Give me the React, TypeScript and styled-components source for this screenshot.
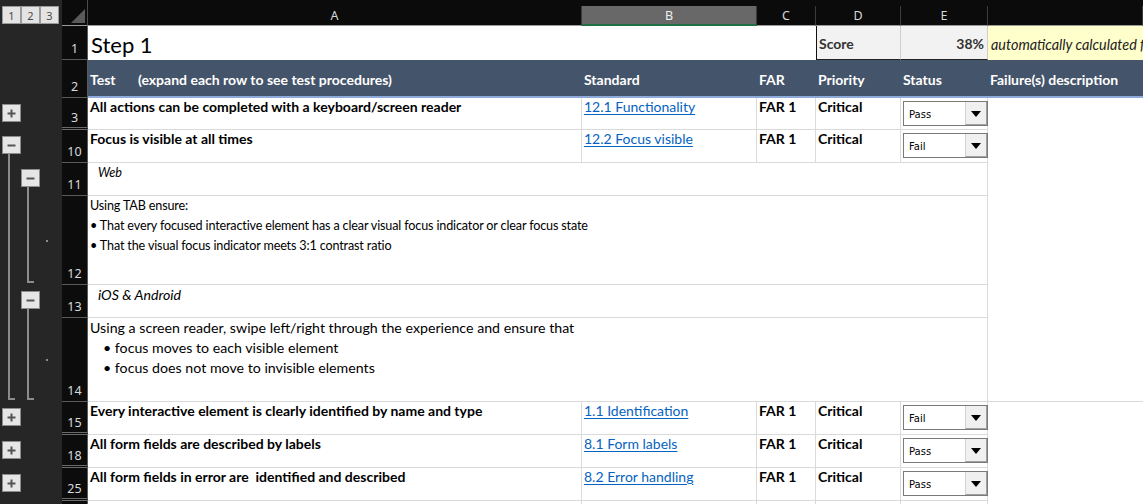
import React from 'react';
import styled, { createGlobalStyle, css } from 'styled-components';

const GlobalStyle = createGlobalStyle`
  html, body { margin: 0; padding: 0; background: #ffffff; }
  body { width: 1143px; height: 504px; overflow: hidden; font-family: Lato, "Liberation Sans", sans-serif; }
  *, *::before, *::after { box-sizing: border-box; }
`;

const COLS = '62px 26px 494px 175px 59px 85px 87px 1fr';
const GRID = '#dadada';
const OUTLINE = '#8c8c8c';

const Sheet = styled.div`
  width: 1143px;
  height: 504px;
  overflow: hidden;
  background: #ffffff;
  display: flex;
  flex-direction: column;
`;

const Row = styled.div<{ $h: number }>`
  display: grid;
  grid-template-columns: ${COLS};
  height: ${p => p.$h}px;
  flex: none;
`;

/* ---------- column header row ---------- */
const HeaderStrip = styled(Row)`
  background: #0b0b0b;
`;

const LevelBar = styled.div`
  background: #262626;
  display: flex;
  align-items: flex-start;
  padding: 6px 0 0 2px;
`;

const LevelButton = styled.div`
  width: 19px;
  height: 18px;
  background: #e4e4e4;
  border: 1px solid #9a9a9a;
  color: #4a4a4a;
  font-family: "Noto Sans", sans-serif;
  font-size: 11px;
  display: flex;
  align-items: center;
  justify-content: center;
`;

const SelectAll = styled.div`
  display: flex;
  align-items: flex-end;
  justify-content: flex-end;
  padding: 0 2px 2px 0;
  border-right: 1px solid #4a4a4a;
  border-bottom: 1px solid #9a9a9a;
`;

const Triangle = styled.div`
  width: 0;
  height: 0;
  border-left: 14px solid transparent;
  border-bottom: 14px solid #5a5a5a;
`;

const ColLetter = styled.div<{ $selected?: boolean }>`
  align-self: end;
  height: 20px;
  display: flex;
  align-items: center;
  justify-content: center;
  color: #d8d8d8;
  font-family: "Noto Sans", sans-serif;
  font-size: 12.5px;
  border-right: 1px solid #3c3c3c;
  ${p =>
    p.$selected
      ? css`
          background: #686868;
          color: #f0f0f0;
          border-bottom: 2px solid #1f7145;
        `
      : css`
          border-bottom: 1px solid #9a9a9a;
        `}
`;

/* ---------- outline gutter ---------- */
const Gutter = styled.div`
  background: #262626;
  display: flex;
  height: 100%;
`;

const Lane = styled.div<{ $w: number; $pl: number }>`
  width: ${p => p.$w}px;
  padding-left: ${p => p.$pl}px;
  display: flex;
  flex-direction: column;
  align-items: flex-start;
  flex: none;
`;

const OutlineButton = styled.div`
  width: 19px;
  height: 18px;
  margin-top: 6px;
  flex: none;
  background: #e6e6e6;
  border: 1px solid ${OUTLINE};
  display: flex;
  align-items: center;
  justify-content: center;
`;

const Stem = styled.div<{ $end?: boolean }>`
  flex: 1;
  margin-left: 6px;
  width: ${p => (p.$end ? 7 : 2)}px;
  border-left: 2px solid ${OUTLINE};
  ${p =>
    p.$end &&
    css`
      border-bottom: 2px solid ${OUTLINE};
      margin-bottom: 2px;
    `}
`;

const Dot = styled.div`
  width: 2px;
  height: 2px;
  background: ${OUTLINE};
  margin: auto 0 auto 6px;
`;

/* ---------- row numbers ---------- */
const RowNum = styled.div<{ $hiddenAfter?: boolean }>`
  background: #0c0c0c;
  color: #dadada;
  font-family: "Noto Sans", sans-serif;
  font-size: 12.5px;
  line-height: 14px;
  display: flex;
  align-items: flex-end;
  justify-content: center;
  padding-bottom: ${p => (p.$hiddenAfter ? 2 : 3)}px;
  border-right: 1px solid #5a5a5a;
  border-bottom: ${p => (p.$hiddenAfter ? '3px double #6a6a6a' : '1px solid #5a5a5a')};
`;

/* ---------- cells ---------- */
const Cell = styled.div<{ $bold?: boolean; $noBottom?: boolean; $noRight?: boolean }>`
  background: #ffffff;
  border-right: ${p => (p.$noRight ? 'none' : `1px solid ${GRID}`)};
  border-bottom: ${p => (p.$noBottom ? 'none' : `1px solid ${GRID}`)};
  padding: 0 2px;
  font-size: 14px;
  line-height: 18px;
  font-weight: ${p => (p.$bold ? 700 : 400)};
  color: #000000;
  white-space: nowrap;
  overflow: hidden;
`;

const StatusCell = styled(Cell)`
  padding: 3px 0 0 2px;
  overflow: visible;
`;

const DetailCell = styled(Cell)`
  grid-column: span 5;
  line-height: 20px;
  padding: 0 2px;
`;

const DetailLine = styled.div<{ $indent?: number; $italic?: boolean; $size: number; $track: number }>`
  padding-left: ${p => p.$indent ?? 0}px;
  font-size: ${p => p.$size}px;
  letter-spacing: ${p => p.$track}px;
  font-style: ${p => (p.$italic ? 'italic' : 'normal')};
`;

const Link = styled.a`
  color: #0563c1;
  text-decoration: underline;
  text-underline-offset: 2px;
`;

const TitleCell = styled.div`
  grid-column: span 3;
  background: #ffffff;
  font-size: 22px;
  display: flex;
  align-items: center;
  padding: 2px 0 0 3px;
  color: #000;
`;

const ScoreCell = styled.div<{ $right?: boolean }>`
  background: #f2f2f2;
  display: flex;
  align-items: center;
  justify-content: ${p => (p.$right ? 'flex-end' : 'flex-start')};
  padding: 2px 3px 0 2px;
  font-weight: 700;
  font-size: 14px;
  color: #333333;
  border-bottom: 1px solid #222;
  border-right: 1px solid #cfcfcf;
  ${p =>
    !p.$right &&
    css`
      border-left: 1px solid #111;
    `}
`;

const NoteCell = styled.div`
  background: #ffffcc;
  display: flex;
  align-items: center;
  padding: 2px 0 0 3px;
  font-style: italic;
  font-size: 14.4px;
  color: #222;
  white-space: nowrap;
  overflow: hidden;
`;

const BandCell = styled.div<{ $span?: number }>`
  grid-column: span ${p => p.$span ?? 1};
  background: #44546a;
  color: #ffffff;
  font-weight: 700;
  font-size: 14px;
  display: flex;
  align-items: center;
  padding: 2px 2px 0;
  white-space: nowrap;
  overflow: hidden;
  border-bottom: 2px solid #8eaadb;
`;

const BandLead = styled.span`
  display: inline-block;
  width: 48px;
`;

/* ---------- status dropdown ---------- */
const Select = styled.div`
  width: 85px;
  height: 25px;
  display: flex;
  background: #ffffff;
  border: 1px solid #7a7a7a;
`;

const SelectValue = styled.div`
  flex: 1;
  display: flex;
  align-items: center;
  padding: 3px 0 0 5px;
  font-family: "DejaVu Sans", sans-serif;
  font-size: 10px;
  color: #000;
`;

const SelectButton = styled.div`
  width: 22px;
  background: #f0f0f0;
  border-left: 1px solid #d4d4d4;
  border-right: 1px solid #a0a0a0;
  border-bottom: 1px solid #a0a0a0;
  display: flex;
  align-items: center;
  justify-content: center;
`;

const Caret = styled.div`
  width: 0;
  height: 0;
  border-left: 5px solid transparent;
  border-right: 5px solid transparent;
  border-top: 6px solid #000;
  margin-top: 1px;
`;

/* ---------- data ---------- */
type LaneSpec = null | 'line' | 'end' | 'dot' | { btn: '+' | '-'; stem?: boolean };

type MainRowData = {
  kind: 'main';
  num: number;
  h: number;
  test: string;
  link: string;
  status: 'Pass' | 'Fail';
  gutter: LaneSpec[];
  hiddenAfter?: boolean;
};

type DetailRowData = {
  kind: 'detail';
  num: number;
  h: number;
  size: number;
  track: number;
  lines: { text: string; indent?: number; italic?: boolean }[];
  gutter: LaneSpec[];
  fBottom?: boolean;
};

const rows: (MainRowData | DetailRowData)[] = [
  {
    kind: 'main',
    num: 3,
    h: 32,
    test: 'All actions can be completed with a keyboard/screen reader',
    link: '12.1 Functionality',
    status: 'Pass',
    gutter: [{ btn: '+' }, null, null],
    hiddenAfter: true,
  },
  {
    kind: 'main',
    num: 10,
    h: 33,
    test: 'Focus is visible at all times',
    link: '12.2 Focus visible',
    status: 'Fail',
    gutter: [{ btn: '-', stem: true }, null, null],
  },
  {
    kind: 'detail',
    num: 11,
    h: 33,
    size: 12.6,
    track: -0.1,
    lines: [{ text: 'Web', indent: 8, italic: true }],
    gutter: ['line', { btn: '-', stem: true }, null],
  },
  {
    kind: 'detail',
    num: 12,
    h: 89,
    size: 12.6,
    track: -0.15,
    lines: [
      { text: 'Using TAB ensure:' },
      { text: '\u2022 That every focused interactive element has a clear visual focus indicator or clear focus state' },
      { text: '\u2022 That the visual focus indicator meets 3:1 contrast ratio' },
    ],
    gutter: ['line', 'end', 'dot'],
  },
  {
    kind: 'detail',
    num: 13,
    h: 33,
    size: 14.2,
    track: 0,
    lines: [{ text: 'iOS & Android', indent: 8, italic: true }],
    gutter: ['line', { btn: '-', stem: true }, null],
  },
  {
    kind: 'detail',
    num: 14,
    h: 84,
    size: 14.2,
    track: 0,
    lines: [
      { text: 'Using a screen reader, swipe left/right through the experience and ensure that' },
      { text: '\u2022 focus moves to each visible element', indent: 13 },
      { text: '\u2022 focus does not move to invisible elements', indent: 13 },
    ],
    gutter: ['end', 'end', 'dot'],
    fBottom: true,
  },
  {
    kind: 'main',
    num: 15,
    h: 33,
    test: 'Every interactive element is clearly identified by name and type',
    link: '1.1 Identification',
    status: 'Fail',
    gutter: [{ btn: '+' }, null, null],
    hiddenAfter: true,
  },
  {
    kind: 'main',
    num: 18,
    h: 33,
    test: 'All form fields are described by labels',
    link: '8.1 Form labels',
    status: 'Pass',
    gutter: [{ btn: '+' }, null, null],
    hiddenAfter: true,
  },
  {
    kind: 'main',
    num: 25,
    h: 33,
    test: 'All form fields in error are \u00a0identified and described',
    link: '8.2 Error handling',
    status: 'Pass',
    gutter: [{ btn: '+' }, null, null],
    hiddenAfter: true,
  },
];

const LANES = [
  { w: 21, pl: 2 },
  { w: 19, pl: 0 },
  { w: 22, pl: 0 },
];

const Symbol: React.FC<{ kind: '+' | '-' }> = ({ kind }) => (
  <svg width="11" height="11" viewBox="0 0 11 11" aria-hidden="true">
    <path d="M1.5 5.5H9.5" stroke="#555" strokeWidth="2" />
    {kind === '+' && <path d="M5.5 1.5V9.5" stroke="#555" strokeWidth="2" />}
  </svg>
);

const OutlineGutter: React.FC<{ lanes: LaneSpec[] }> = ({ lanes }) => (
  <Gutter>
    {LANES.map((l, i) => {
      const spec = lanes[i];
      return (
        <Lane key={i} $w={l.w} $pl={l.pl}>
          {spec === 'line' && <Stem />}
          {spec === 'end' && <Stem $end />}
          {spec === 'dot' && <Dot />}
          {spec && typeof spec === 'object' && (
            <>
              <OutlineButton>
                <Symbol kind={spec.btn} />
              </OutlineButton>
              {spec.stem && <Stem />}
            </>
          )}
        </Lane>
      );
    })}
  </Gutter>
);

const StatusSelect: React.FC<{ value: string }> = ({ value }) => (
  <Select>
    <SelectValue>{value}</SelectValue>
    <SelectButton>
      <Caret />
    </SelectButton>
  </Select>
);

export default function App() {
  return (
    <>
      <GlobalStyle />
      <Sheet>
        <HeaderStrip $h={26}>
          <LevelBar>
            <LevelButton>1</LevelButton>
            <LevelButton>2</LevelButton>
            <LevelButton>3</LevelButton>
          </LevelBar>
          <SelectAll>
            <Triangle />
          </SelectAll>
          <ColLetter>A</ColLetter>
          <ColLetter $selected>B</ColLetter>
          <ColLetter>C</ColLetter>
          <ColLetter>D</ColLetter>
          <ColLetter>E</ColLetter>
          <ColLetter />
        </HeaderStrip>

        <Row $h={34}>
          <OutlineGutter lanes={[null, null, null]} />
          <RowNum>1</RowNum>
          <TitleCell>Step 1</TitleCell>
          <ScoreCell>Score</ScoreCell>
          <ScoreCell $right>38%</ScoreCell>
          <NoteCell>automatically calculated from the status of each test</NoteCell>
        </Row>

        <Row $h={38}>
          <OutlineGutter lanes={[null, null, null]} />
          <RowNum>2</RowNum>
          <BandCell>
            <BandLead>Test</BandLead>(expand each row to see test procedures)
          </BandCell>
          <BandCell>Standard</BandCell>
          <BandCell>FAR</BandCell>
          <BandCell>Priority</BandCell>
          <BandCell>Status</BandCell>
          <BandCell>Failure(s) description</BandCell>
        </Row>

        {rows.map(r =>
          r.kind === 'main' ? (
            <Row key={r.num} $h={r.h}>
              <OutlineGutter lanes={r.gutter} />
              <RowNum $hiddenAfter={r.hiddenAfter}>{r.num}</RowNum>
              <Cell $bold>{r.test}</Cell>
              <Cell>
                <Link>{r.link}</Link>
              </Cell>
              <Cell $bold>FAR 1</Cell>
              <Cell $bold>Critical</Cell>
              <StatusCell>
                <StatusSelect value={r.status} />
              </StatusCell>
              <Cell $noBottom $noRight />
            </Row>
          ) : (
            <Row key={r.num} $h={r.h}>
              <OutlineGutter lanes={r.gutter} />
              <RowNum>{r.num}</RowNum>
              <DetailCell>
                {r.lines.map((ln, i) => (
                  <DetailLine
                    key={i}
                    $indent={ln.indent}
                    $italic={ln.italic}
                    $size={r.size}
                    $track={r.track}
                  >
                    {ln.text}
                  </DetailLine>
                ))}
              </DetailCell>
              <Cell $noBottom={!r.fBottom} $noRight />
            </Row>
          )
        )}

        <Row $h={30}>
          <OutlineGutter lanes={[null, null, null]} />
          <RowNum />
          <Cell />
          <Cell />
          <Cell />
          <Cell />
          <Cell />
          <Cell $noBottom $noRight />
        </Row>
      </Sheet>
    </>
  );
}
